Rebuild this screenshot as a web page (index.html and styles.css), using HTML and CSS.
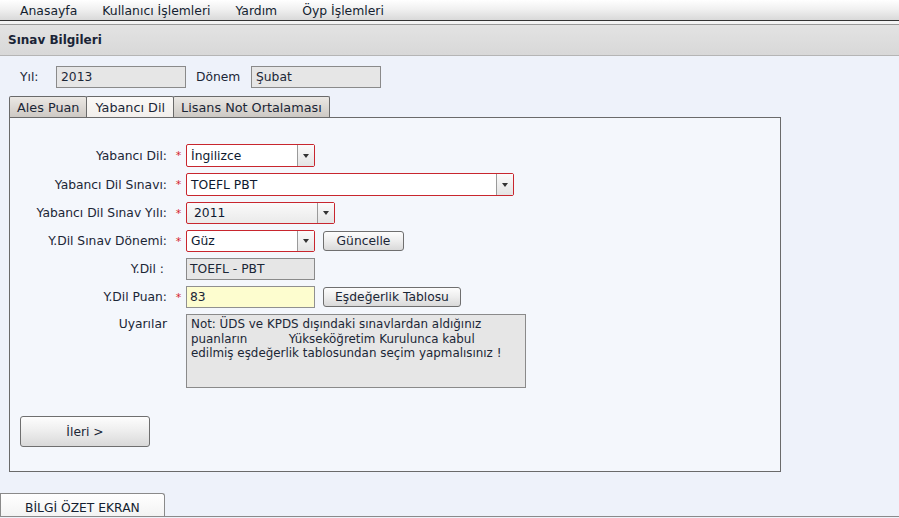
FILE: index.html
```html
<!DOCTYPE html>
<html lang="tr">
<head>
<meta charset="utf-8">
<title>Sınav Bilgileri</title>
<link rel="stylesheet" href="styles.css">
</head>
<body>
<nav class="menu">
  <span class="menu-item">Anasayfa</span>
  <span class="menu-item">Kullanıcı İşlemleri</span>
  <span class="menu-item">Yardım</span>
  <span class="menu-item">Öyp İşlemleri</span>
</nav>
<div class="menu-gap"></div>
<header class="title-bar">Sınav Bilgileri</header>
<main class="content">
  <div class="term-row">
    <span class="term-label">Yıl:</span>
    <span class="box term-year">2013</span>
    <span class="term-label term-label2">Dönem</span>
    <span class="box term-sem">Şubat</span>
  </div>
  <div class="tabs">
    <span class="tab">Ales Puan</span>
    <span class="tab active">Yabancı Dil</span>
    <span class="tab">Lisans Not Ortalaması</span>
  </div>
  <section class="panel">
    <div class="form">
      <label class="lbl">Yabancı Dil:</label><span class="star">*</span>
      <div class="field"><div class="select req w128 h23"><span class="sel-text">İngilizce</span><span class="arrow"></span></div></div>

      <label class="lbl">Yabancı Dil Sınavı:</label><span class="star">*</span>
      <div class="field"><div class="select req w327 h23"><span class="sel-text">TOEFL PBT</span><span class="arrow"></span></div></div>

      <label class="lbl">Yabancı Dil Sınav Yılı:</label><span class="star">*</span>
      <div class="field"><div class="select req w148 h22 grey"><span class="sel-text">2011</span><span class="arrow"></span></div></div>

      <label class="lbl">Y.Dil Sınav Dönemi:</label><span class="star">*</span>
      <div class="field"><div class="select req w128 h22"><span class="sel-text">Güz</span><span class="arrow"></span></div><button class="btn btn-small btn-gunc">Güncelle</button></div>

      <label class="lbl lbl-ro">Y.Dil :</label><span class="star"></span>
      <div class="field"><span class="box ro">TOEFL - PBT</span></div>

      <label class="lbl">Y.Dil Puan:</label><span class="star">*</span>
      <div class="field"><span class="box puan">83</span><button class="btn btn-small btn-esd">Eşdeğerlik Tablosu</button></div>

      <label class="lbl lbl-top">Uyarılar</label><span class="star"></span>
      <div class="field"><div class="note">Not: ÜDS ve KPDS dışındaki sınavlardan aldığınız<br>puanların &nbsp;&nbsp;&nbsp;&nbsp;&nbsp;&nbsp;&nbsp;&nbsp;&nbsp;&nbsp;Yükseköğretim Kurulunca kabul<br>edilmiş eşdeğerlik tablosundan seçim yapmalısınız !</div></div>
    </div>
    <button class="btn btn-next">İleri &gt;</button>
  </section>
  <div class="bottom-tabs">
    <span class="btab">BİLGİ ÖZET EKRAN</span>
  </div>
</main>
</body>
</html>
```
FILE: styles.css
```css
* { box-sizing: border-box; }
html, body { margin: 0; padding: 0; }
body {
  width: 899px;
  height: 518px;
  overflow: hidden;
  font-family: "DejaVu Sans", Verdana, sans-serif;
  font-size: 12.3px;
  color: #1b2636;
  background: #eef2fa;
}
.menu {
  height: 21px;
  display: flex;
  gap: 25px;
  padding-left: 20px;
  align-items: center;
  background: linear-gradient(#ffffff, #f1f1f1 45%, #d9d9d9);
  border-bottom: 1px solid #333;
  font-size: 12.4px;
  color: #141e30;
}
.menu-gap {
  height: 3px;
  background: #f4f4f4;
}
.title-bar {
  height: 32px;
  display: flex;
  align-items: center;
  padding-left: 8px;
  font-weight: bold;
  font-size: 12px;
  color: #1a2436;
  background: linear-gradient(#e3e3e3, #d8d8d8);
  border-top: 1px solid #9a9a9a;
  border-bottom: 1px solid #b5b5b5;
}
.content {
  padding-top: 10px;
}
.term-row {
  display: flex;
  align-items: center;
  height: 22px;
}
.term-label {
  margin-left: 20px;
  width: 36px;
}
.term-label2 {
  margin-left: 10px;
  width: 55px;
}
.box {
  display: flex;
  align-items: center;
  height: 22px;
  padding-left: 4px;
  border: 1px solid #8a8a8a;
  background: #e6e6e6;
  color: #1b2636;
}
.term-year { width: 130px; }
.term-sem { width: 130px; }
.tabs {
  display: flex;
  margin-top: 8px;
  margin-left: 9px;
  height: 21px;
  align-items: flex-end;
  font-size: 12.8px;
}
.tab {
  height: 21px;
  padding: 0 7px;
  display: flex;
  align-items: center;
  border: 1px solid #6a6a6a;
  border-bottom: none;
  border-radius: 2px 2px 0 0;
  background: linear-gradient(#ebe8e4, #cdc9c4);
  color: #1b2636;
  margin-right: -1px;
}
.tab.active {
  height: 21px;
  background: linear-gradient(#fbf9f7, #f2efec);
  padding: 0 8px;
  position: relative;
  z-index: 1;
}
.panel {
  margin-left: 9px;
  width: 772px;
  height: 355px;
  border: 1px solid #6a6a6a;
  background: #f4f7fc;
  padding-top: 26px;
}
.form {
  display: grid;
  grid-template-columns: 158px 18px 1fr;
  row-gap: 6px;
  align-items: center;
}
.lbl {
  text-align: right;
  padding-right: 1px;
  color: #1b2636;
}
.lbl-ro { padding-right: 4px; }
.lbl-top {
  align-self: start;
  padding-top: 3px;
}
.star {
  color: #d4242c;
  font-size: 11px;
  text-align: center;
  padding-left: 3px;
}
.field {
  display: flex;
  align-items: center;
  gap: 8px;
}
.select {
  display: flex;
  align-items: center;
  border: 1px solid #c8262e;
  border-radius: 2px;
  background: #fff;
  color: #0e1a30;
}
.select.grey { background: linear-gradient(#fafafa, #eaeaea); }
.w128 { width: 129px; }
.w327 { width: 328px; }
.w148 { width: 149px; }
.h23 { height: 23px; }
.h22 { height: 22px; }
.sel-text {
  flex: 1;
  padding-left: 4px;
}
.select.grey .sel-text { padding-left: 7px; }
.arrow {
  width: 17px;
  align-self: stretch;
  border-left: 1px solid #9a9a9a;
  background: linear-gradient(#fbfbfb, #e4e4e4);
  display: flex;
  align-items: center;
  justify-content: center;
}
.arrow::after {
  content: "";
  border-left: 3.5px solid transparent;
  border-right: 3.5px solid transparent;
  border-top: 4px solid #333;
}
.ro {
  width: 129px;
  padding-left: 3px;
}
.puan {
  width: 129px;
  background: #fdfdcf;
  border-color: #909090;
  padding-left: 3px;
}
.btn {
  font-family: "DejaVu Sans", Verdana, sans-serif;
  font-size: 12.3px;
  color: #1b2636;
  border: 1px solid #6f6f6f;
  border-radius: 3px;
  background: linear-gradient(#fdfdfd, #ededed 50%, #d9d9d9);
  padding: 0;
  cursor: pointer;
}
.btn-small { height: 20px; }
.btn-gunc { width: 81px; }
.btn-esd { width: 138px; }
.note {
  width: 340px;
  height: 74px;
  border: 1px solid #8a8a8a;
  background: #e6e6e6;
  padding: 2px 4px;
  line-height: 14.5px;
  font-size: 11.9px;
  color: #1b2636;
  white-space: nowrap;
}
.btn-next {
  display: block;
  margin: 28px 0 0 10px;
  width: 130px;
  height: 31px;
}
.bottom-tabs {
  margin-top: 22px;
  height: 23px;
  border-bottom: 1px solid #8a8a8a;
  display: flex;
  align-items: flex-end;
}
.btab {
  width: 165px;
  height: 23px;
  border: 1px solid #8a8a8a;
  border-bottom: none;
  border-radius: 0 3px 0 0;
  background: linear-gradient(#ffffff, #f3f3f3);
  display: flex;
  align-items: flex-end;
  padding-left: 24px;
  padding-bottom: 1px;
  color: #141e30;
}
```
